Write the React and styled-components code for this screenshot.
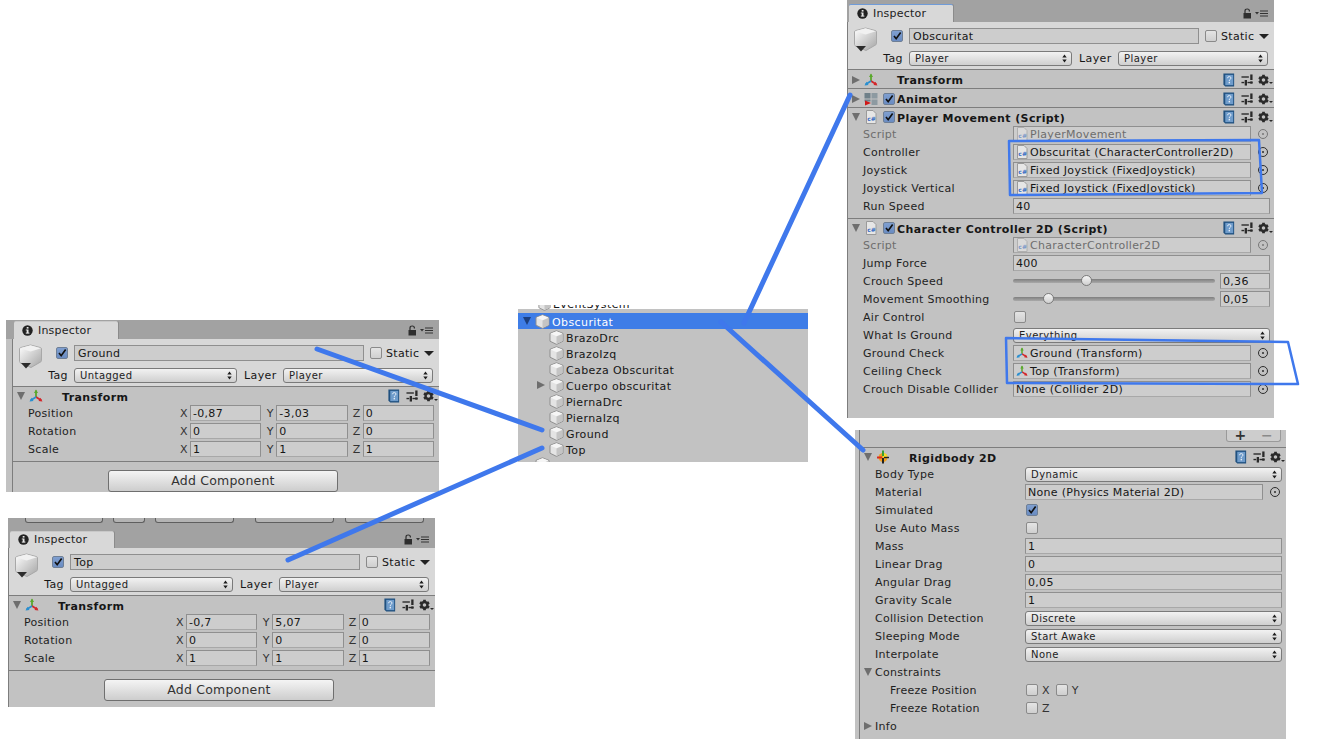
import React from "react";
import styled, { createGlobalStyle } from "styled-components";
import { FaCog } from "react-icons/fa";

const GlobalStyle = createGlobalStyle`
  html, body {
    margin: 0;
    padding: 0;
    background: #ffffff;
  }
  body {
    font-family: "DejaVu Sans", Verdana, sans-serif;
    font-size: 11px;
    color: #161616;
  }
`;

/* ---------- small drawings ---------- */

const CubeIcon = ({ size = 15 }) => (
  <svg width={size} height={size} viewBox="0 0 15 15">
    <path d="M7.5 0.8 L14 3.4 L14 11.2 L7.5 14.4 L1 11.2 L1 3.4 Z" fill="#e4e4e4" stroke="#8f8f8f" strokeLinejoin="round" />
    <path d="M1.5 3.6 L7.5 6.2 L13.5 3.6 L7.5 1.2 Z" fill="#f6f6f6" />
    <path d="M7.5 6.4 L13.5 3.9 L13.5 10.9 L7.5 13.9 Z" fill="#c4c4c4" />
  </svg>
);

const BigCube = () => (
  <svg width="23" height="26" viewBox="0 0 23 26">
    <defs>
      <linearGradient id="bigcube" x1="0" y1="0" x2="1" y2="1">
        <stop offset="0" stopColor="#ffffff" />
        <stop offset="1" stopColor="#a4a4a4" />
      </linearGradient>
    </defs>
    <path d="M11.5 1 L21.5 3.6 Q22.5 4 22.5 5 L22.5 16.5 Q22.5 17.5 21.5 18 L12 23.5 L1.5 19 Q0.5 18.5 0.5 17.5 L0.5 5 Q0.5 4 1.5 3.6 Z" fill="url(#bigcube)" stroke="#a8a8a8" />
    <path d="M1 4.2 L11.5 7.4 L22 4.2 L11.5 1.3 Z" fill="#f1f1f1" />
    <path d="M2 19 L12 19 L7 24.5 Z" fill="#2c2c2c" />
  </svg>
);

const TransformIcon = ({ size = 14 }) => (
  <svg width={size} height={size} viewBox="0 0 14 14">
    <path d="M7 8 L7 1.5" stroke="#5aa82c" strokeWidth="1.8" />
    <path d="M7 0.5 L5 4 L9 4 Z" fill="#5aa82c" />
    <path d="M7 8 L12.5 11.5" stroke="#d3262a" strokeWidth="1.8" />
    <path d="M13.5 12.5 L9.5 12 L11.4 8.8 Z" fill="#d3262a" />
    <path d="M7 8 L1.5 11.5" stroke="#2a8fd0" strokeWidth="1.8" />
    <path d="M0.5 12.5 L4.5 12 L2.6 8.8 Z" fill="#2a8fd0" />
  </svg>
);

const AnimatorIcon = () => (
  <svg width="14" height="14" viewBox="0 0 14 14">
    <rect x="0.5" y="1" width="6" height="5.5" fill="#6f8089" />
    <rect x="7.5" y="1" width="6" height="5.5" fill="#8d9aa1" />
    <rect x="7.5" y="7.5" width="6" height="5.5" fill="#8d9aa1" />
    <rect x="0.5" y="7.5" width="6" height="2" fill="#6f8089" />
    <path d="M1 8.5 L7 11 L1 13.5 Z" fill="#d01818" />
  </svg>
);

const ScriptIcon = ({ faded }) => (
  <svg width="12" height="14" viewBox="0 0 12 14" opacity={faded ? 0.55 : 1}>
    <path d="M1.5 0.5 H8 L11 3.5 V13.5 H1.5 Z" fill="#e6e6e6" stroke="#9a9a9a" />
    <text x="2.2" y="11" fontSize="6" fontWeight="700" fontFamily="DejaVu Sans, sans-serif" fill="#3a6fc4">c#</text>
  </svg>
);

const RigidIcon = () => (
  <svg width="14" height="14" viewBox="0 0 14 14">
    <circle cx="7" cy="7.5" r="4.5" fill="#f0a020" />
    <path d="M7 3 A4.5 4.5 0 0 1 11.5 7.5 L7 7.5 Z" fill="#f6dc30" />
    <path d="M7 0.5 V6" stroke="#3aa030" strokeWidth="2" />
    <path d="M7 8 V13.5" stroke="#222222" strokeWidth="2" />
    <path d="M1 7.5 H6" stroke="#d82c20" strokeWidth="2" />
    <path d="M8 7.5 H13" stroke="#222222" strokeWidth="1.4" />
  </svg>
);

const HelpBook = () => (
  <svg width="14" height="14" viewBox="0 0 14 15">
    <path d="M1 0.5 H12.5 V14.5 H3 L1 12.5 Z" fill="#20507f" />
    <rect x="3" y="2" width="8.5" height="11" fill="#6f9ccb" />
    <rect x="6.6" y="9.6" width="1.5" height="1.5" fill="#e6eef6" />
    <path d="M5.4 5.6 Q5.6 3.8 7.3 3.8 Q9.1 3.8 9.1 5.4 Q9.1 6.4 8 7 L7.4 7.5 V8.8" fill="none" stroke="#e6eef6" strokeWidth="1" />
  </svg>
);

const PresetIcon = () => (
  <svg width="12" height="12" viewBox="0 0 13 13">
    <rect x="0.5" y="2.5" width="8" height="1.5" fill="#2a2a2a" />
    <rect x="10" y="0.5" width="2.5" height="6" fill="#2a2a2a" />
    <rect x="0.5" y="8.5" width="3" height="1.5" fill="#2a2a2a" />
    <rect x="4" y="6.5" width="2.5" height="6" fill="#2a2a2a" />
    <rect x="7" y="8.5" width="5.5" height="1.5" fill="#2a2a2a" />
    <rect x="10" y="8" width="2.5" height="2.5" fill="#2a2a2a" />
  </svg>
);

const LockIcon = () => (
  <svg width="9" height="11" viewBox="0 0 9 11">
    <rect x="0.5" y="5" width="7.5" height="5.5" fill="#2e2e2e" />
    <path d="M2 5 V3 Q2 1 4.2 1 Q6.4 1 6.4 3 V3.6" fill="none" stroke="#2e2e2e" strokeWidth="1.2" />
  </svg>
);

const MenuIcon = () => (
  <svg width="13" height="7" viewBox="0 0 13 7">
    <path d="M0 2 L4 2 L2 4.5 Z" fill="#333333" />
    <rect x="5" y="0.5" width="8" height="1" fill="#333333" />
    <rect x="5" y="3" width="8" height="1" fill="#333333" />
    <rect x="5" y="5.5" width="8" height="1" fill="#333333" />
  </svg>
);

const InfoIcon = () => (
  <svg width="11" height="11" viewBox="0 0 11 11">
    <circle cx="5.5" cy="5.5" r="5.2" fill="#222222" />
    <rect x="4.7" y="2" width="1.8" height="1.6" fill="#e8e8e8" />
    <rect x="4.7" y="4.5" width="1.8" height="3.6" fill="#e8e8e8" />
    <rect x="3.8" y="4.5" width="1" height="1" fill="#e8e8e8" />
    <rect x="3.8" y="7.6" width="3.6" height="1" fill="#e8e8e8" />
  </svg>
);

const CheckMark = () => (
  <svg width="12" height="12" viewBox="0 0 12 12">
    <path d="M2.4 6 L5 9.2 L10.4 1.8" fill="none" stroke="#111111" strokeWidth="2" />
  </svg>
);

const UpDown = () => (
  <svg width="5" height="9" viewBox="0 0 5 9">
    <path d="M2.5 0.5 L4.7 3.5 H0.3 Z M2.5 8.5 L4.7 5.5 H0.3 Z" fill="#1c1c1c" />
  </svg>
);

/* ---------- canvas and windows ---------- */

const Canvas = styled.div`
  position: relative;
  width: 1329px;
  height: 756px;
  overflow: hidden;
  background: #ffffff;
`;

const Window = styled.section`
  position: absolute;
  left: ${(p) => p.$x}px;
  top: ${(p) => p.$y}px;
  width: ${(p) => p.$w}px;
  height: ${(p) => p.$h}px;
  background: #c2c2c2;
  overflow: hidden;
  display: flex;
  flex-direction: column;
`;

const Content = styled.div`
  flex: 1;
  display: flex;
  flex-direction: column;
  margin-left: ${(p) => p.$gutter || 0}px;
  border-left: 1px solid #7d7d7d;
  min-height: 0;
`;

const ToolStubs = styled.div`
  display: flex;
  height: 13px;
  padding-left: 17px;
  gap: 10px;
  background: #a2a2a2;
`;

const ToolStub = styled.div`
  width: ${(p) => p.$w}px;
  height: 5px;
  margin-right: ${(p) => p.$after || 0}px;
  border: 1px solid #5f5f5f;
  border-top: 0;
  border-radius: 0 0 3px 3px;
  background: #b4b4b4;
  box-sizing: border-box;
`;

const TabStrip = styled.div`
  display: flex;
  align-items: flex-end;
  height: ${(p) => p.$h}px;
  padding-left: ${(p) => p.$pad}px;
  padding-right: 6px;
  background: #a2a2a2;
`;

const Tab = styled.div`
  display: flex;
  align-items: center;
  gap: 5px;
  width: 104px;
  height: ${(p) => p.$h}px;
  padding: 0 0 ${(p) => p.$lift || 0}px 8px;
  box-sizing: border-box;
  background: #d8d8d8;
  border-top: 1px solid ${(p) => (p.$active ? "#6f9bd8" : "#c8c8c8")};
  border-radius: 2px 2px 0 0;
  box-shadow: 1px 0 0 #8b8b8b;
  letter-spacing: 0.2px;
  color: #222222;
`;

const TabTools = styled.div`
  margin-left: auto;
  display: flex;
  align-items: center;
  gap: 3px;
  height: 18px;
`;

const ObjectHeader = styled.div`
  display: flex;
  height: 48px;
  flex-shrink: 0;
  box-sizing: border-box;
  padding: 5px 6px 0 6px;
  background: #d8d8d8;
  border-bottom: 1px solid #7d7d7d;
`;

const CubeSlot = styled.div`
  width: 22px;
  padding-top: 0;
`;

const HeaderBody = styled.div`
  flex: 1;
  display: flex;
  flex-direction: column;
  gap: 4px;
`;

const HeaderRow = styled.div`
  display: flex;
  align-items: center;
  height: 18px;
  padding-left: ${(p) => p.$pad || 0}px;
`;

const NameField = styled.div`
  flex: 1;
  height: 16px;
  line-height: 15px;
  margin-left: 6px;
  padding-left: 3px;
  box-sizing: border-box;
  background: #cdcdcd;
  border: 1px solid #8f8f8f;
  letter-spacing: 0.3px;
`;

const StaticGroup = styled.div`
  display: flex;
  align-items: center;
  width: 63px;
  margin-left: 6px;
  letter-spacing: 0.3px;
  gap: 4px;
`;

const SmallTriangle = styled.span`
  width: 0;
  height: 0;
  margin-left: 1px;
  border-left: 5px solid transparent;
  border-right: 5px solid transparent;
  border-top: 5px solid #222222;
`;

const HeaderLabel = styled.span`
  width: ${(p) => p.$w}px;
  margin: 0 ${(p) => p.$right || 0}px 0 ${(p) => p.$left || 0}px;
  text-align: ${(p) => p.$align || "right"};
  letter-spacing: 0.4px;
`;

/* ---------- controls ---------- */

const Check = styled.span`
  display: inline-flex;
  align-items: center;
  justify-content: center;
  flex-shrink: 0;
  width: 12px;
  height: 12px;
  box-sizing: border-box;
  border: 1px solid ${(p) => (p.$on ? "#6e7f96" : "#8a8a8a")};
  border-radius: 2px;
  background: ${(p) => (p.$on ? "linear-gradient(#7f9fd0, #6a8cc2)" : "linear-gradient(#e4e4e4, #cfcfcf)")};
`;

const Select = styled.div`
  display: flex;
  align-items: center;
  justify-content: space-between;
  width: ${(p) => (p.$w ? `${p.$w}px` : "auto")};
  flex: ${(p) => (p.$w ? "none" : 1)};
  height: 15px;
  box-sizing: border-box;
  padding: 0 4px 0 5px;
  border: 1px solid #7a7a7a;
  border-radius: 3px;
  background: linear-gradient(#f2f2f2, #cfcfcf);
  font-size: 10px;
  letter-spacing: 0.45px;
  color: #222222;
`;

const Field = styled.div`
  flex: ${(p) => (p.$w ? `0 0 ${p.$w}px` : "1 1 0")};
  min-width: 0;
  display: flex;
  align-items: center;
  gap: 2px;
  height: 16px;
  box-sizing: border-box;
  padding-left: 2px;
  background: #cdcdcd;
  border: 1px solid #8f8f8f;
  border-bottom-color: #a8a8a8;
  letter-spacing: 0.3px;
  white-space: nowrap;
  overflow: hidden;
  color: ${(p) => (p.$muted ? "#6d6d6d" : "#161616")};
`;

const PickerSlot = styled.span`
  display: flex;
  align-items: center;
  justify-content: center;
  flex-shrink: 0;
  width: 24px;
`;

const PickerDot = styled.span`
  position: relative;
  width: 8px;
  height: 8px;
  border: 1px solid ${(p) => (p.$muted ? "#777777" : "#2d2d2d")};
  border-radius: 50%;
  &::after {
    content: "";
    position: absolute;
    left: 3px;
    top: 3px;
    width: 2px;
    height: 2px;
    border-radius: 50%;
    background: ${(p) => (p.$muted ? "#777777" : "#2d2d2d")};
  }
`;

const SliderTrack = styled.div`
  position: relative;
  flex: 1;
  height: 4px;
  margin-right: 5px;
  border-radius: 2px;
  background: linear-gradient(#7f7f7f, #a9a9a9);
`;

const SliderThumb = styled.span`
  position: absolute;
  top: -4px;
  left: ${(p) => p.$at}px;
  width: 11px;
  height: 11px;
  box-sizing: border-box;
  border: 1px solid #7a7a7a;
  border-radius: 50%;
  background: linear-gradient(#f5f5f5, #cfcfcf);
`;

const Row = styled.div`
  display: flex;
  align-items: center;
  flex-shrink: 0;
  height: 18px;
  padding: 0 ${(p) => p.$right || 4}px 0 15px;
`;

const Label = styled.span`
  display: flex;
  align-items: center;
  width: ${(p) => 150 - (p.$indent || 0)}px;
  padding-left: ${(p) => p.$indent || 0}px;
  flex-shrink: 0;
  letter-spacing: 0.3px;
  white-space: nowrap;
  color: ${(p) => (p.$muted ? "#6d6d6d" : "#1e1e1e")};
`;

const BoxSlot = styled.span`
  display: flex;
  margin-left: 1px;
`;

const Foldout = styled.span`
  flex-shrink: 0;
  width: 0;
  height: 0;
  ${(p) =>
    p.$open
      ? `border-left: 4px solid transparent; border-right: 4px solid transparent; border-top: 8px solid ${p.$color || "#6e6e6e"};`
      : `border-top: 4px solid transparent; border-bottom: 4px solid transparent; border-left: 8px solid ${p.$color || "#6e6e6e"};`}
`;

const RowFold = styled.span`
  display: flex;
  width: 11px;
  margin-left: -11px;
`;

const AxisLetter = styled.span`
  letter-spacing: 0.3px;
  color: #333333;
  margin: 0 ${(p) => p.$right || 0}px 0 ${(p) => p.$left || 0}px;
`;

const VectorCell = styled.div`
  flex: 1;
  display: flex;
  align-items: center;
  margin-left: ${(p) => (p.$first ? 0 : 3)}px;
  & > span {
    flex: 0 0 12px;
    text-align: center;
  }
`;

const ComponentHeader = styled.div`
  display: flex;
  align-items: center;
  flex-shrink: 0;
  height: ${(p) => (p.$open ? 17 : 19)}px;
  padding: 1px 1px 0 4px;
  box-sizing: border-box;
  ${(p) => (!p.$open ? "border-bottom: 1px solid #7d7d7d;" : "")}
`;

const FoldSlot = styled.span`
  display: flex;
  justify-content: center;
  width: 8px;
  margin-right: 4px;
`;

const IconSlot = styled.span`
  display: flex;
  justify-content: center;
  width: 14px;
  margin-right: 5px;
`;

const CheckSlot = styled.span`
  display: flex;
  width: 12px;
  margin-right: 2px;
`;

const Title = styled.span`
  flex: 1;
  padding-top: 2px;
  font-weight: 700;
  letter-spacing: 0.4px;
  white-space: nowrap;
`;

const HeaderTools = styled.span`
  display: flex;
  align-items: center;
  gap: 5px;
`;

const GearWrap = styled.span`
  display: flex;
  align-items: center;
  width: 15px;
  font-size: 12px;
  color: #2a2a2a;
  &::after {
    content: "";
    margin: 7px 0 0 0;
    border-left: 2px solid transparent;
    border-right: 2px solid transparent;
    border-top: 2px solid #2a2a2a;
  }
`;

const SectionEnd = styled.div`
  height: ${(p) => p.$gap || 3}px;
  flex-shrink: 0;
  border-bottom: 1px solid #7d7d7d;
`;

const AddButton = styled.div`
  display: flex;
  align-items: center;
  justify-content: center;
  flex-shrink: 0;
  width: 230px;
  height: 22px;
  margin: 8px 0 0 95px;
  padding-bottom: 2px;
  box-sizing: border-box;
  border: 1px solid #6f6f6f;
  border-radius: 3px;
  background: linear-gradient(#f4f4f4, #cdcdcd);
  font-size: 12.5px;
  letter-spacing: 0.2px;
  color: #333333;
`;

const BottomStrip = styled.div`
  display: flex;
  justify-content: flex-end;
  flex-shrink: 0;
  height: 18px;
  padding-right: 5px;
  box-sizing: border-box;
  border-bottom: 1px solid #7d7d7d;
`;

const PlusMinus = styled.div`
  display: flex;
  align-items: center;
  justify-content: space-around;
  width: 55px;
  height: 12px;
  box-sizing: border-box;
  border: 1px solid #9a9a9a;
  border-top: 0;
  border-radius: 0 0 3px 3px;
  background: #cdcdcd;
  font-size: 14px;
  line-height: 11px;
  font-weight: 700;
  color: #333333;
  & span:last-child {
    color: #8a8a8a;
  }
`;

/* ---------- hierarchy ---------- */

const HierarchyWrap = styled.section`
  position: absolute;
  left: 518px;
  top: 305px;
  width: 290px;
  display: flex;
  flex-direction: column;
`;

const TopSliver = styled.div`
  height: 8px;
  overflow: hidden;
  background: linear-gradient(transparent 4px, #c2c2c2 4px);
  padding-left: 20px;
  font-size: 11px;
  line-height: 11px;
  letter-spacing: 0.4px;
  & > div {
    margin-top: -8px;
    display: flex;
    gap: 2px;
    align-items: center;
    height: 15px;
  }
`;

const TreeRow = styled.div`
  display: flex;
  align-items: center;
  height: 16px;
  padding-left: ${(p) => p.$pad}px;
  background: ${(p) => (p.$selected ? "#3e7de7" : "#c2c2c2")};
  color: ${(p) => (p.$selected ? "#ffffff" : "#161616")};
  letter-spacing: 0.4px;
`;

const TreeArrow = styled.span`
  display: flex;
  justify-content: center;
  width: 17px;
  margin-left: -17px;
`;

const TreeName = styled.span`
  margin-left: 2px;
  padding-top: 2px;
`;

const BottomSliver = styled.div`
  height: 5px;
  overflow: hidden;
  background: #c2c2c2;
  padding-left: 17px;
  display: flex;
  align-items: flex-start;
`;

/* ---------- annotations ---------- */

const Annotations = styled.svg`
  position: absolute;
  left: 0;
  top: 0;
  pointer-events: none;
`;

/* ---------- composed parts ---------- */

function InspectorTop({ name, tag, layer }) {
  return (
    <ObjectHeader>
      <CubeSlot><BigCube /></CubeSlot>
      <HeaderBody>
        <HeaderRow $pad={15}>
          <Check $on><CheckMark /></Check>
          <NameField>{name}</NameField>
          <StaticGroup>
            <Check />
            Static
            <SmallTriangle />
          </StaticGroup>
        </HeaderRow>
        <HeaderRow>
          <HeaderLabel $w={27} $right={6}>Tag</HeaderLabel>
          <Select $w={163}>{tag}<UpDown /></Select>
          <HeaderLabel $w={39} $left={7} $align="left">Layer</HeaderLabel>
          <Select>{layer}<UpDown /></Select>
        </HeaderRow>
      </HeaderBody>
    </ObjectHeader>
  );
}

function InspectorTab({ height, stripHeight, pad, active, lift }) {
  return (
    <TabStrip $h={stripHeight} $pad={pad}>
      <Tab $h={height} $active={active} $lift={lift}>
        <InfoIcon />
        Inspector
      </Tab>
      <TabTools>
        <LockIcon />
        <MenuIcon />
      </TabTools>
    </TabStrip>
  );
}

function CompHeader({ open, icon, checked, title }) {
  return (
    <ComponentHeader $open={open}>
      <FoldSlot><Foldout $open={open} /></FoldSlot>
      <IconSlot>{icon}</IconSlot>
      <CheckSlot>{checked && <Check $on><CheckMark /></Check>}</CheckSlot>
      <Title>{title}</Title>
      <HeaderTools>
        <HelpBook />
        <PresetIcon />
        <GearWrap><FaCog /></GearWrap>
      </HeaderTools>
    </ComponentHeader>
  );
}

function VectorRow({ label, values }) {
  const axes = ["X", "Y", "Z"];
  return (
    <Row $right={5}>
      <Label>{label}</Label>
      {axes.map((a, i) => (
        <VectorCell key={a} $first={i === 0}>
          <AxisLetter>{a}</AxisLetter>
          <Field>{values[i]}</Field>
        </VectorCell>
      ))}
    </Row>
  );
}

function ObjectRow({ label, icon, value, muted }) {
  return (
    <Row>
      <Label $muted={muted}>{label}</Label>
      <Field $w={238} $muted={muted}>{icon}{value}</Field>
      <PickerSlot><PickerDot $muted={muted} /></PickerSlot>
    </Row>
  );
}

function ValueRow({ label, value }) {
  return (
    <Row>
      <Label>{label}</Label>
      <Field>{value}</Field>
    </Row>
  );
}

function SelectRow({ label, value }) {
  return (
    <Row>
      <Label>{label}</Label>
      <Select>{value}<UpDown /></Select>
    </Row>
  );
}

function CheckRow({ label, on, indent }) {
  return (
    <Row>
      <Label $indent={indent}>{label}</Label>
      <BoxSlot><Check $on={on}>{on && <CheckMark />}</Check></BoxSlot>
    </Row>
  );
}

function SliderRow({ label, value, at }) {
  return (
    <Row>
      <Label>{label}</Label>
      <SliderTrack><SliderThumb $at={at} /></SliderTrack>
      <Field $w={50}>{value}</Field>
    </Row>
  );
}

function TransformInspector({ name, position, x, y, h, gutter, stubs }) {
  return (
    <Window $x={x} $y={y} $w={427 + gutter} $h={h}>
      {stubs && (
        <ToolStubs>
          <ToolStub $w={78} />
          <ToolStub $w={32} />
          <ToolStub $w={79} $after={11} />
          <ToolStub $w={79} $after={1} />
          <ToolStub $w={79} />
        </ToolStubs>
      )}
      <InspectorTab stripHeight={stubs ? 17 : 19} height={stubs ? 17 : 18} pad={gutter + 2} lift={stubs ? 2 : 0} />
      <Content $gutter={gutter}>
        <InspectorTop name={name} tag="Untagged" layer="Player" />
        <CompHeader open icon={<TransformIcon />} title="Transform" />
        <VectorRow label="Position" values={position} />
        <VectorRow label="Rotation" values={["0", "0", "0"]} />
        <VectorRow label="Scale" values={["1", "1", "1"]} />
        <SectionEnd />
        <AddButton>Add Component</AddButton>
      </Content>
    </Window>
  );
}

const children = [
  { name: "BrazoDrc" },
  { name: "BrazoIzq" },
  { name: "Cabeza Obscuritat" },
  { name: "Cuerpo obscuritat", fold: true },
  { name: "PiernaDrc" },
  { name: "PiernaIzq" },
  { name: "Ground" },
  { name: "Top" },
];

export default function App() {
  return (
    <Canvas>
      <GlobalStyle />

      {/* big inspector, top right */}
      <Window $x={847} $y={0} $w={427} $h={418}>
        <InspectorTab stripHeight={22} height={18} pad={2} active />
        <Content>
          <InspectorTop name="Obscuritat" tag="Player" layer="Player" />
          <CompHeader icon={<TransformIcon />} title="Transform" />
          <CompHeader icon={<AnimatorIcon />} checked title="Animator" />
          <CompHeader open icon={<ScriptIcon />} checked title="Player Movement (Script)" />
          <ObjectRow muted label="Script" icon={<ScriptIcon faded />} value="PlayerMovement" />
          <ObjectRow label="Controller" icon={<ScriptIcon />} value="Obscuritat (CharacterController2D)" />
          <ObjectRow label="Joystick" icon={<ScriptIcon />} value="Fixed Joystick (FixedJoystick)" />
          <ObjectRow label="Joystick Vertical" icon={<ScriptIcon />} value="Fixed Joystick (FixedJoystick)" />
          <ValueRow label="Run Speed" value="40" />
          <SectionEnd />
          <CompHeader open icon={<ScriptIcon />} checked title="Character Controller 2D (Script)" />
          <ObjectRow muted label="Script" icon={<ScriptIcon faded />} value="CharacterController2D" />
          <ValueRow label="Jump Force" value="400" />
          <SliderRow label="Crouch Speed" value="0,36" at={68} />
          <SliderRow label="Movement Smoothing" value="0,05" at={30} />
          <CheckRow label="Air Control" />
          <SelectRow label="What Is Ground" value="Everything" />
          <ObjectRow label="Ground Check" icon={<TransformIcon size={12} />} value="Ground (Transform)" />
          <ObjectRow label="Ceiling Check" icon={<TransformIcon size={12} />} value="Top (Transform)" />
          <ObjectRow label="Crouch Disable Collider" value="None (Collider 2D)" />
        </Content>
      </Window>

      <TransformInspector
        name="Ground"
        position={["-0,87", "-3,03", "0"]}
        x={6}
        y={320}
        h={172}
        gutter={6}
      />

      <TransformInspector
        name="Top"
        position={["-0,7", "5,07", "0"]}
        x={8}
        y={518}
        h={189}
        gutter={0}
        stubs
      />

      <HierarchyWrap>
        <TopSliver>
          <div><CubeIcon size={13} />EventSystem</div>
        </TopSliver>
        <TreeRow $pad={17} $selected>
          <TreeArrow><Foldout $open $color="#1c3f7f" /></TreeArrow>
          <CubeIcon />
          <TreeName>Obscuritat</TreeName>
        </TreeRow>
        {children.map((c) => (
          <TreeRow key={c.name} $pad={31}>
            {c.fold && <TreeArrow><Foldout /></TreeArrow>}
            <CubeIcon />
            <TreeName>{c.name}</TreeName>
          </TreeRow>
        ))}
        <BottomSliver><CubeIcon /></BottomSliver>
      </HierarchyWrap>

      {/* rigidbody inspector */}
      <Window $x={855} $y={430} $w={431} $h={309}>
        <Content $gutter={4}>
          <BottomStrip>
            <PlusMinus><span>+</span><span>−</span></PlusMinus>
          </BottomStrip>
          <CompHeader open icon={<RigidIcon />} title="Rigidbody 2D" />
          <SelectRow label="Body Type" value="Dynamic" />
          <Row>
            <Label>Material</Label>
            <Field $w={238}>None (Physics Material 2D)</Field>
            <PickerSlot><PickerDot /></PickerSlot>
          </Row>
          <CheckRow label="Simulated" on />
          <CheckRow label="Use Auto Mass" />
          <ValueRow label="Mass" value="1" />
          <ValueRow label="Linear Drag" value="0" />
          <ValueRow label="Angular Drag" value="0,05" />
          <ValueRow label="Gravity Scale" value="1" />
          <SelectRow label="Collision Detection" value="Discrete" />
          <SelectRow label="Sleeping Mode" value="Start Awake" />
          <SelectRow label="Interpolate" value="None" />
          <Row>
            <Label><RowFold><Foldout $open /></RowFold>Constraints</Label>
          </Row>
          <Row>
            <Label $indent={15}>Freeze Position</Label>
            <BoxSlot><Check /></BoxSlot>
            <AxisLetter $left={4} $right={6}>X</AxisLetter>
            <Check />
            <AxisLetter $left={4}>Y</AxisLetter>
          </Row>
          <Row>
            <Label $indent={15}>Freeze Rotation</Label>
            <BoxSlot><Check /></BoxSlot>
            <AxisLetter $left={4}>Z</AxisLetter>
          </Row>
          <Row>
            <Label><RowFold><Foldout /></RowFold>Info</Label>
          </Row>
        </Content>
      </Window>

      {/* hand drawn arrows and boxes on top of the screenshots */}
      <Annotations width="1329" height="756" fill="none" stroke="#3f78ec" strokeLinecap="round" strokeLinejoin="round">
        <path d="M317 349 L542 430" strokeWidth="5" />
        <path d="M288 560 L542 448" strokeWidth="5" />
        <path d="M744 323 L850 95" strokeWidth="5" />
        <path d="M721 322 L863 450" strokeWidth="5" />
        <path d="M1009 141 L1259 140 L1262 193 L1010 195 Z" strokeWidth="2.5" />
        <path d="M1006 338 L1288 342 L1298 384 L1007 383 Z" strokeWidth="2.5" />
      </Annotations>
    </Canvas>
  );
}
